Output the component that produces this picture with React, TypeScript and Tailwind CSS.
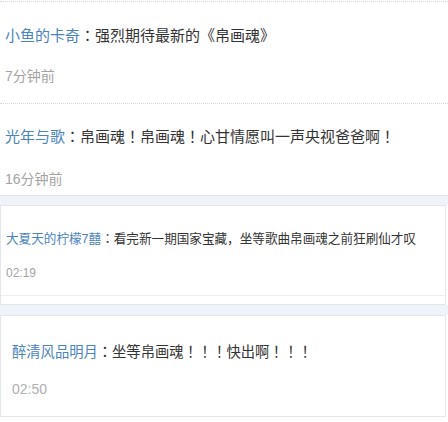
const font = { fontFamily: '"Liberation Sans", "Noto Sans CJK SC", sans-serif' };
const punct = { fontFamily: '"Noto Sans CJK TC", sans-serif' };

type Comment = {
  name: string;
  text: string;
  time: string;
};

// full-width ：and ！ sit centred in the reference, as in a TC font
function Text({ value }: { value: string }) {
  const parts = value.split(/([：！])/);
  return (
    <>
      {parts.map((p, i) =>
        p === '：' || p === '！' ? (
          <span key={i} style={punct}>
            {p}
          </span>
        ) : (
          <span key={i}>{p}</span>
        ),
      )}
    </>
  );
}

export default function App() {
  const rows: Comment[] = [
    { name: '小鱼的卡奇', text: '强烈期待最新的《帛画魂》', time: '7分钟前' },
    { name: '光年与歌', text: '帛画魂！帛画魂！心甘情愿叫一声央视爸爸啊！', time: '16分钟前' },
    { name: '大夏天的柠檬7囍', text: '看完新一期国家宝藏，坐等歌曲帛画魂之前狂刷仙才叹', time: '02:19' },
    { name: '醉清风品明月', text: '坐等帛画魂！！！快出啊！！！', time: '02:50' },
  ];

  return (
    <div className="h-[422px] w-[448px] overflow-hidden bg-white" style={font}>
      {/* first item, dotted rules */}
      <div className="mt-[1px] h-[103px] border-y border-dotted border-[#d4d6d9] pl-[5px]">
        <p className="pt-[22px] text-[15px] leading-[22px] whitespace-nowrap">
          <span className="text-[#4a83bd]">{rows[0].name}</span>
          <span className="text-[#333]">
            <Text value={'：' + rows[0].text} />
          </span>
        </p>
        <p className="mt-[18px] text-[14px] leading-[22px] text-[#a3a3a3]">{rows[0].time}</p>
      </div>

      {/* second item */}
      <div className="h-[92px] border-b border-[#e0e3e7] pl-[5px]">
        <p className="pt-[21px] text-[15px] leading-[22px] whitespace-nowrap">
          <span className="text-[#4a83bd]">{rows[1].name}</span>
          <span className="text-[#333]">
            <Text value={'：' + rows[1].text} />
          </span>
        </p>
        <p className="mt-[20px] text-[14px] leading-[22px] text-[#a3a3a3]">{rows[1].time}</p>
      </div>

      <div className="h-[9px] bg-[#eef4fa]" />

      {/* third item */}
      <div className="mr-[2px] border border-[#e3e6ea] bg-white">
        <div className="h-[90px] border-b border-[#eceef1] pl-[5px]">
          <p className="pt-[22px] text-[12.6px] leading-[20px] whitespace-nowrap">
            <span className="text-[#4a83bd]">{rows[2].name}</span>
            <span className="text-[#333]">
              <Text value={'：' + rows[2].text} />
            </span>
          </p>
          <p className="mt-[14px] text-[12px] leading-[20px] text-[#a3a3a3]">{rows[2].time}</p>
        </div>
        <div className="h-[8px]" />
      </div>

      <div className="h-[10px] bg-[#eef4fa]" />

      {/* fourth item */}
      <div className="mr-[2px] h-[102px] border border-[#e3e6ea] pl-[11px]">
        <p className="pt-[24px] text-[14.3px] leading-[22px] whitespace-nowrap">
          <span className="text-[#4a83bd]">{rows[3].name}</span>
          <span className="text-[#333]">
            <Text value={'：' + rows[3].text} />
          </span>
        </p>
        <p className="mt-[15px] text-[14px] leading-[22px] text-[#b0b0b0]">{rows[3].time}</p>
      </div>
    </div>
  );
}
